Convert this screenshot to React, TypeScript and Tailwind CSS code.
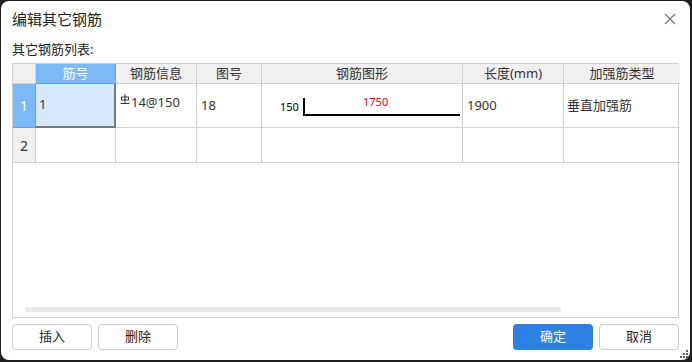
import React from 'react';

const cols = ['w-[23px]', 'w-[80px]', 'w-[81px]', 'w-[65px]', 'w-[201px]', 'w-[101px]', 'w-[116px]'];
const headers = ['', '筋号', '钢筋信息', '图号', '钢筋图形', '长度(mm)', '加强筋类型'];

function GradeMark() {
  return (
    <svg width="10" height="11" viewBox="0 0 10 11" className="mr-px mt-[1px] self-start">
      <path d="M1.5 6 V3 H8.5 V6 H1.5 Z" fill="none" stroke="#333" strokeWidth="1" />
      <path d="M5 0 V9.5 M0.5 9.5 H9.5" stroke="#333" strokeWidth="1" />
    </svg>
  );
}

function BarShape() {
  return (
    <div className="relative h-full w-full">
      <span className="absolute left-[18px] top-[15px] text-[11px] text-black">150</span>
      <span className="absolute left-[101px] top-[10px] text-[11px] text-[#e00000]">1750</span>
      <div className="absolute left-[41px] top-[14px] h-[18px] w-[157px] border-b-2 border-l-2 border-black" />
    </div>
  );
}

export default function App() {
  return (
    <div className="h-[362px] w-[692px] bg-[#1f1f1f] pb-[2px] pl-px pr-[2px] pt-px font-['Noto_Sans','Noto_Sans_CJK_SC',sans-serif] text-[#333]">
      <div className="flex h-full flex-col rounded-lg bg-white px-[11px]">
        <div className="flex h-[36px] items-center justify-between">
          <span className="text-[15px] text-[#222]">编辑其它钢筋</span>
          <svg width="12" height="12" viewBox="0 0 12 12" className="mr-[3px]">
            <path d="M1 1 L11 11 M11 1 L1 11" stroke="#777" strokeWidth="1.2" />
          </svg>
        </div>
        <div className="flex h-[26px] items-center text-[13px] text-[#222]">其它钢筋列表:</div>

        <div className="relative flex h-[255px] w-[667px] flex-col border border-[#cfcfcf]">
          <div className="flex h-[20px] text-[13px]">
            {headers.map((h, i) => (
              <div
                key={i}
                className={`${cols[i]} flex shrink-0 items-center justify-center border-b border-r ${
                  i === 1 ? 'border-[#5aa2ee] bg-[#7db8f7] text-white' : 'border-[#d0d0d0] bg-[#f0f0f0] text-[#333]'
                } ${i === 6 ? 'border-r-0' : ''}`}
              >
                {h}
              </div>
            ))}
          </div>

          <div className="flex h-[44px] text-[13px]">
            <div className={`${cols[0]} flex shrink-0 items-center justify-center border-b border-r border-[#5aa2ee] bg-[#7db8f7] text-[14px] text-white`}>
              1
            </div>
            <div className={`${cols[1]} flex shrink-0 items-center border-b-2 border-r-2 border-[#7a7a7a] bg-[#d5e9fd] pl-[3px]`}>1</div>
            <div className={`${cols[2]} flex shrink-0 items-center border-b border-r border-[#d0d0d0] pl-[4px]`}>
              <span className="flex items-start pb-[6px]">
                <GradeMark />
                14@150
              </span>
            </div>
            <div className={`${cols[3]} flex shrink-0 items-center border-b border-r border-[#d0d0d0] pl-[4px]`}>18</div>
            <div className={`${cols[4]} shrink-0 border-b border-r border-[#d0d0d0]`}>
              <BarShape />
            </div>
            <div className={`${cols[5]} flex shrink-0 items-center border-b border-r border-[#d0d0d0] pl-[4px]`}>1900</div>
            <div className={`${cols[6]} flex shrink-0 items-center border-b border-[#d0d0d0] pl-[3px]`}>垂直加强筋</div>
          </div>

          <div className="flex h-[35px] text-[13px]">
            {cols.map((c, i) => (
              <div
                key={i}
                className={`${c} flex shrink-0 items-center justify-center border-b border-[#d0d0d0] ${
                  i === 0 ? 'bg-[#f0f0f0] text-[14px]' : ''
                } ${i === 6 ? '' : 'border-r'}`}
              >
                {i === 0 ? '2' : ''}
              </div>
            ))}
          </div>

          <div className="flex-1" />
          <div className="mb-[5px] ml-[12px] h-[5px] w-[536px] rounded-full bg-[#e9e9e9]" />
        </div>

        <div className="mt-[6px] flex items-center text-[13px] text-[#222]">
          <button className="h-[26px] w-[80px] rounded border border-[#cccccc] bg-white">插入</button>
          <button className="ml-[6px] h-[26px] w-[80px] rounded border border-[#cccccc] bg-white">删除</button>
          <div className="flex-1" />
          <button className="h-[26px] w-[80px] rounded bg-[#2e80e2] text-white">确定</button>
          <button className="ml-[6px] h-[26px] w-[80px] rounded border border-[#cccccc] bg-white">取消</button>
        </div>

        <div className="relative flex-1">
          <svg width="8" height="8" viewBox="0 0 8 8" className="absolute bottom-[2px] right-[-9px]">
            <rect x="6" y="0" width="2" height="2" fill="#666" />
            <rect x="3" y="3" width="2" height="2" fill="#666" />
            <rect x="6" y="3" width="2" height="2" fill="#666" />
            <rect x="0" y="6" width="2" height="2" fill="#666" />
            <rect x="3" y="6" width="2" height="2" fill="#666" />
            <rect x="6" y="6" width="2" height="2" fill="#666" />
          </svg>
        </div>
      </div>
    </div>
  );
}
